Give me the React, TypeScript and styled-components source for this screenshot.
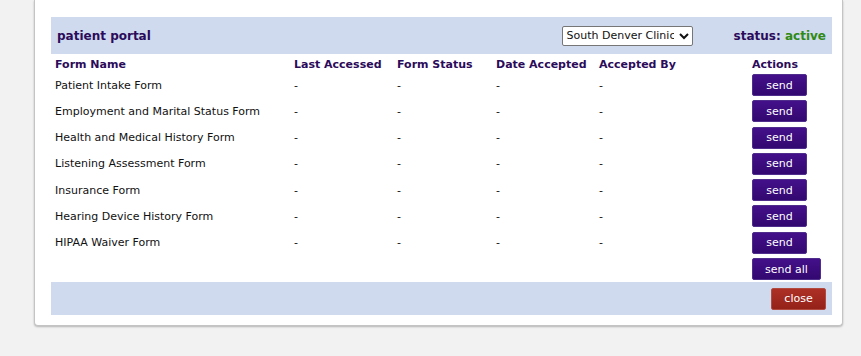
import styled, { createGlobalStyle } from "styled-components";

const GlobalStyle = createGlobalStyle`
  html, body {
    margin: 0;
    padding: 0;
    background: #f2f2f2;
    font-family: "DejaVu Sans", Verdana, sans-serif;
  }
`;

const Page = styled.div`
  padding: 0 18px 0 34px;
  height: 356px;
  overflow: hidden;
`;

const Panel = styled.div`
  background: #ffffff;
  border: 1px solid #c4c4c4;
  border-top: none;
  border-radius: 0 0 4px 4px;
  box-shadow: 0 1px 2px rgba(0, 0, 0, 0.25);
  padding: 17px 10px 10px 16px;
`;

const Bar = styled.div`
  background: #cfdaee;
  display: flex;
  align-items: center;
  height: 37px;
  padding: 0 6px;
`;

const Title = styled.h2`
  margin: 0;
  flex: 1;
  font-size: 12px;
  font-weight: bold;
  color: #2b0b5a;
`;

const SelectWrap = styled.div`
  position: relative;
  margin-right: 41px;
  display: flex;
`;

const ClinicSelect = styled.select`
  appearance: none;
  width: 131px;
  height: 20px;
  font-family: "DejaVu Sans", Verdana, sans-serif;
  font-size: 11px;
  border: 1px solid #767676;
  border-radius: 2px;
  background: #fff;
  color: #111;
  padding: 0 18px 0 4px;
`;

const Chevron = styled.svg`
  position: absolute;
  right: 4px;
  top: 6px;
  pointer-events: none;
`;

const Status = styled.span`
  font-size: 12px;
  font-weight: bold;
  color: #2b0b5a;
`;

const Active = styled.span`
  color: #2f8a14;
`;

const Table = styled.table`
  width: 100%;
  border-collapse: collapse;
  table-layout: fixed;
  font-size: 11px;
  color: #111;
`;

const Th = styled.th`
  text-align: left;
  font-weight: bold;
  color: #2b0b5a;
  height: 20px;
  padding: 0 4px;
  vertical-align: middle;
`;

const Td = styled.td`
  height: 22px;
  padding: 0 4px 4.3px;
  vertical-align: middle;
  white-space: nowrap;
`;

const LastTd = styled.td`
  height: 22px;
  padding: 0 4px 2px;
`;

const Button = styled.button<{ $tone?: "red" }>`
  height: 22px;
  padding: 0 12px;
  min-width: 55px;
  font-family: "DejaVu Sans", Verdana, sans-serif;
  font-size: 11px;
  color: #fff;
  border-radius: 2px;
  cursor: pointer;
  border: 1px solid ${(p) => (p.$tone === "red" ? "#b24a40" : "#4e2d8c")};
  background: ${(p) =>
    p.$tone === "red"
      ? "linear-gradient(#ad3026, #942219)"
      : "linear-gradient(#43108a, #330870)"};
`;

const Footer = styled(Bar)`
  justify-content: flex-end;
  height: 33px;
  padding: 0 6px;
`;

const forms = [
  "Patient Intake Form",
  "Employment and Marital Status Form",
  "Health and Medical History Form",
  "Listening Assessment Form",
  "Insurance Form",
  "Hearing Device History Form",
  "HIPAA Waiver Form",
];

export default function App() {
  return (
    <>
      <GlobalStyle />
      <Page>
        <Panel>
          <Bar>
            <Title>patient portal</Title>
            <SelectWrap>
              <ClinicSelect defaultValue="sdc">
                <option value="sdc">South Denver Clinic</option>
              </ClinicSelect>
              <Chevron width="10" height="8" viewBox="0 0 10 8">
                <path d="M1 2 L5 6 L9 2" fill="none" stroke="#111" strokeWidth="2" />
              </Chevron>
            </SelectWrap>
            <Status>
              status: <Active>active</Active>
            </Status>
          </Bar>
          <Table>
            <colgroup>
              <col style={{ width: 239 }} />
              <col style={{ width: 103 }} />
              <col style={{ width: 99 }} />
              <col style={{ width: 103 }} />
              <col style={{ width: 153 }} />
              <col />
            </colgroup>
            <thead>
              <tr>
                <Th>Form Name</Th>
                <Th>Last Accessed</Th>
                <Th>Form Status</Th>
                <Th>Date Accepted</Th>
                <Th>Accepted By</Th>
                <Th>Actions</Th>
              </tr>
            </thead>
            <tbody>
              {forms.map((name) => (
                <tr key={name}>
                  <Td>{name}</Td>
                  <Td>-</Td>
                  <Td>-</Td>
                  <Td>-</Td>
                  <Td>-</Td>
                  <Td>
                    <Button>send</Button>
                  </Td>
                </tr>
              ))}
              <tr>
                <LastTd colSpan={5} />
                <LastTd>
                  <Button>send all</Button>
                </LastTd>
              </tr>
            </tbody>
          </Table>
          <Footer>
            <Button $tone="red">close</Button>
          </Footer>
        </Panel>
      </Page>
    </>
  );
}
